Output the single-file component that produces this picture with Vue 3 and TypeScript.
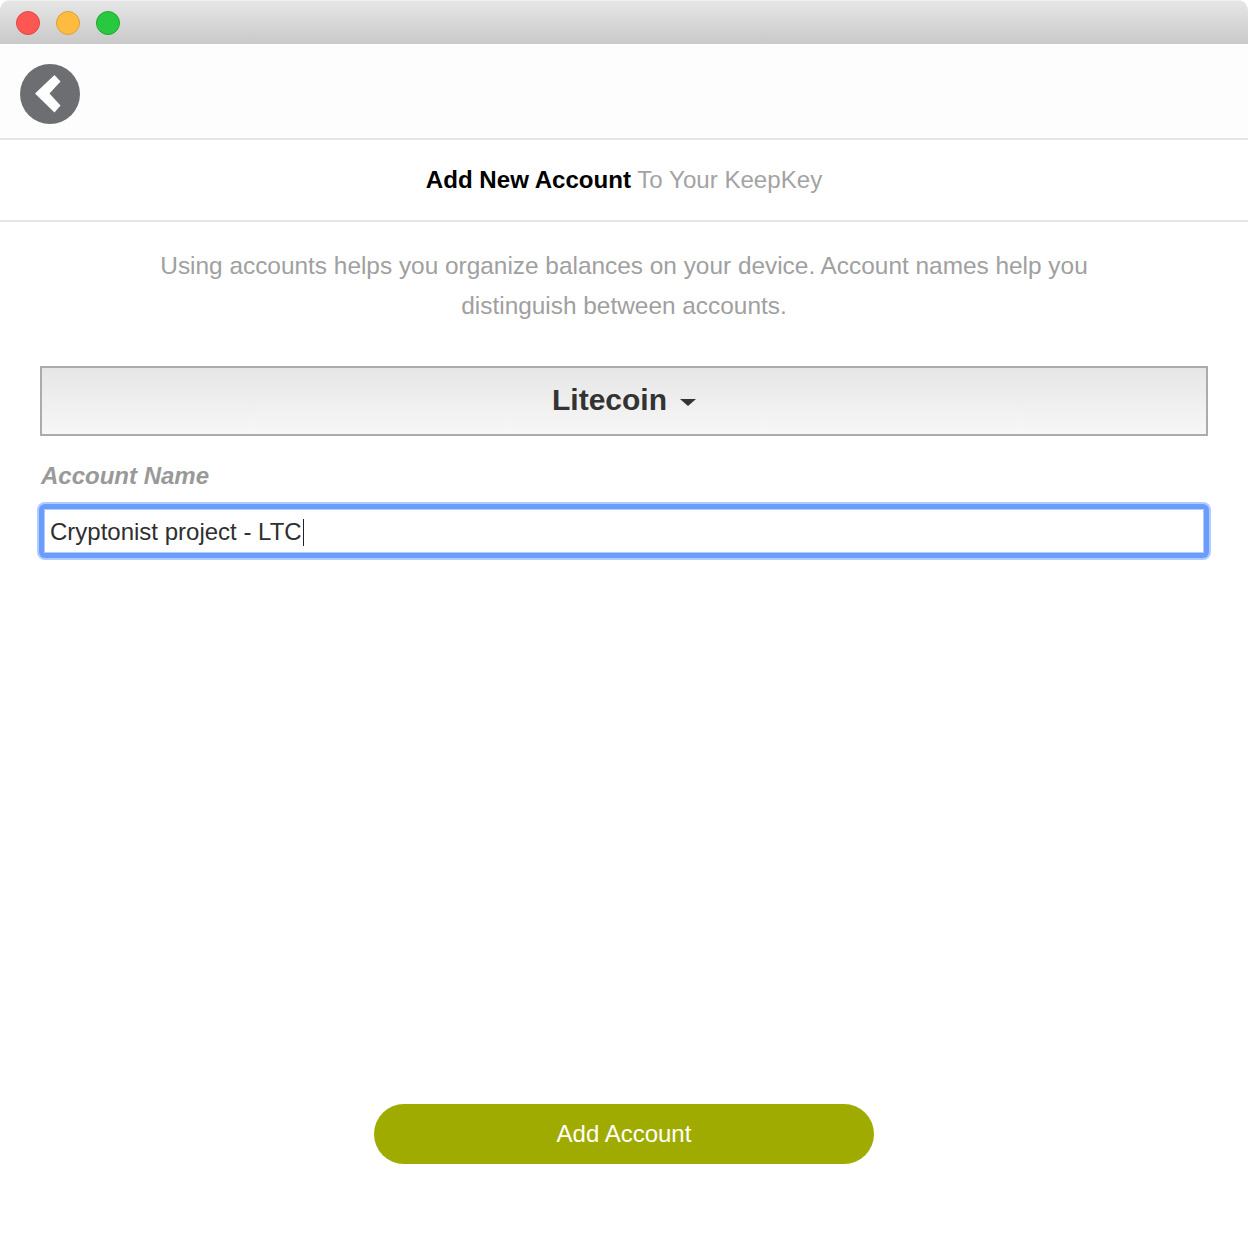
<script setup lang="ts">
const coin: string = 'Litecoin'
const accountName: string = 'Cryptonist project - LTC'
</script>

<template>
  <div class="window">
    <div class="titlebar">
      <span class="light red"></span>
      <span class="light yellow"></span>
      <span class="light green"></span>
    </div>
    <header class="toolbar">
      <button class="back" type="button" aria-label="Back">
        <svg width="60" height="60" viewBox="0 0 60 60">
          <circle cx="30" cy="30" r="30" fill="#6d6e72" />
          <path d="M34.500 11 L40.500 17.500 L29.500 29.500 L40.500 41.500 L34.500 48.500 L15 29.500 Z" fill="#fff" />
        </svg>
      </button>
    </header>
    <h1 class="title"><strong>Add New Account</strong> <span>To Your KeepKey</span></h1>
    <main class="content">
      <p class="intro">Using accounts helps you organize balances on your device. Account names help you distinguish between accounts.</p>
      <button class="select" type="button">
        {{ coin }}<span class="caret"></span>
      </button>
      <label class="label">Account Name</label>
      <div class="input">{{ accountName }}<span class="cursor"></span></div>
    </main>
    <footer class="footer">
      <button class="submit" type="button">Add Account</button>
    </footer>
  </div>
</template>

<style>
html, body { margin: 0; background: #fff; }
</style>

<style scoped>
.window {
  width: 1248px;
  height: 1244px;
  display: flex;
  flex-direction: column;
  overflow: hidden;
  background: #fff;
  border-radius: 10px 10px 8px 8px;
  font-family: "Liberation Sans", Arial, sans-serif;
}
.titlebar {
  height: 44px;
  flex: none;
  display: flex;
  align-items: center;
  gap: 16px;
  padding-left: 16px;
  box-sizing: border-box;
  background: linear-gradient(#e6e6e6, #c9c9c9);
  border-top: 1px solid #f0f0f0;
}
.light {
  width: 24px;
  height: 24px;
  box-sizing: border-box;
  border-radius: 50%;
  border: 1px solid;
}
.red { background: #fc5753; border-color: #df4744; }
.yellow { background: #fdbc40; border-color: #de9f34; }
.green { background: #28c840; border-color: #1aab29; }
.toolbar {
  height: 96px;
  flex: none;
  box-sizing: border-box;
  padding: 20px 20px 0;
  background: #fdfdfd;
  border-bottom: 2px solid #e6e6e6;
}
.back {
  display: block;
  width: 60px;
  height: 60px;
  padding: 0;
  border: 0;
  background: none;
}
.back svg { display: block; }
.title {
  margin: 0;
  height: 82px;
  flex: none;
  box-sizing: border-box;
  border-bottom: 2px solid #e6e6e6;
  text-align: center;
  font-size: 24.100px;
  line-height: 80px;
  font-weight: 400;
  color: #a3a3a3;
}
.title strong { color: #000; }
.content {
  flex: 1;
  padding: 24px 40px 0;
}
.intro {
  margin: 0 auto;
  width: 960px;
  text-align: center;
  font-size: 24.400px;
  line-height: 40px;
  color: #a0a0a0;
}
.select {
  display: block;
  width: 100%;
  height: 70px;
  margin-top: 40px;
  padding: 0 0 2px;
  box-sizing: border-box;
  border: 2px solid #ababab;
  background: linear-gradient(#e6e6e6, #f7f7f7);
  font-family: inherit;
  font-size: 30px;
  font-weight: 700;
  color: #333;
  text-align: center;
}
.caret {
  display: inline-block;
  margin-left: 13px;
  vertical-align: middle;
  border-top: 7px solid #333;
  border-left: 8px solid transparent;
  border-right: 8px solid transparent;
}
.label {
  display: block;
  margin-top: 26px;
  padding-left: 1px;
  font-size: 24px;
  line-height: 28px;
  font-weight: 700;
  font-style: italic;
  color: #999;
}
.input {
  height: 52px;
  margin-top: 15px;
  box-sizing: border-box;
  padding: 2px 0 0 6px;
  border: 4px solid #6a9cfb;
  border-radius: 5px;
  box-shadow: 0 0 0 1px #6a9cfb, 0 0 0 3px #b0ccfe, inset 0 0 0 1px #b0ccfe;
  background: #fff;
  font-size: 24px;
  color: #2f2f2f;
  display: flex;
  align-items: center;
}
.cursor {
  width: 1.500px;
  height: 27px;
  background: #222;
  margin-left: 1px;
}
.footer {
  flex: none;
  display: flex;
  justify-content: center;
  padding-bottom: 80px;
}
.submit {
  width: 500px;
  height: 60px;
  border: 0;
  border-radius: 30px;
  background: #a0ab00;
  color: #fff;
  font-family: inherit;
  font-size: 24px;
}
</style>
